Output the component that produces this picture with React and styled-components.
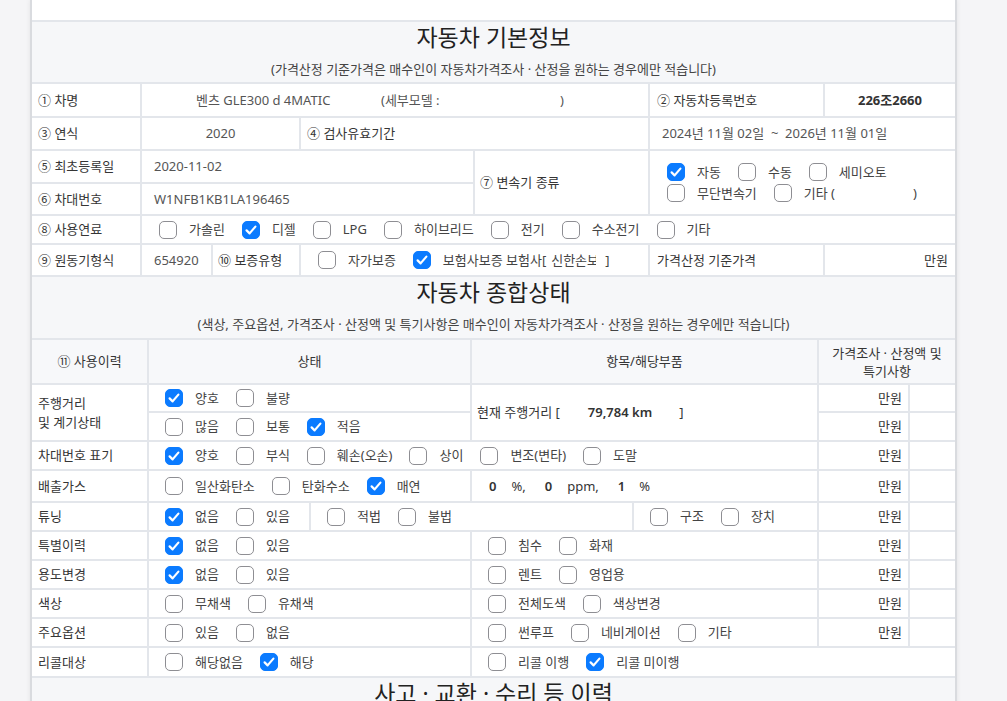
import React from 'react';
import styled, { createGlobalStyle } from 'styled-components';

const LINE = '#e3e6eb';

const Global = createGlobalStyle`
  html, body {
    margin: 0;
    background: #f5f5f7;
    font-family: "Noto Sans", "Noto Sans CJK KR", sans-serif;
    color: #333;
  }
`;

const Page = styled.div`
  height: 701px;
  overflow: hidden;
  padding-left: 30px;
`;

const Sheet = styled.div`
  width: 923px;
  background: ${LINE};
  border-left: 2px solid #d9dbdf;
  border-right: 2px solid #d9dbdf;
  box-shadow: 0 0 5px rgba(0, 0, 0, 0.08);
  display: flex;
  flex-direction: column;
  gap: 2px;
`;

const TopGap = styled.div`
  height: 20px;
  background: #fff;
`;

const SectionHead = styled.div`
  height: ${(p) => p.$h || 60}px;
  background: #f6f7f9;
  display: flex;
  flex-direction: column;
  align-items: center;
`;

const Title = styled.div`
  font-size: 23px;
  line-height: 30px;
  color: #222;
`;

const Note = styled.div`
  margin-top: 7px;
  font-size: 13px;
  line-height: 20px;
  color: #444;
`;

const Grid = styled.div`
  display: grid;
  gap: 2px;
  grid-template-columns: ${(p) => p.$cols};
  grid-template-rows: ${(p) => p.$rows};
`;

const Cell = styled.div`
  grid-column: span ${(p) => p.$span || 1};
  grid-row: span ${(p) => p.$rows || 1};
  background: ${(p) => (p.$head ? '#f7f8fa' : '#fff')};
  display: flex;
  align-items: center;
  justify-content: ${(p) =>
    p.$align === 'center' ? 'center' : p.$align === 'right' ? 'flex-end' : 'flex-start'};
  text-align: ${(p) => p.$align || 'left'};
  padding: 0 ${(p) => (p.$pad === undefined ? 6 : p.$pad)}px;
  font-size: 13px;
  line-height: ${(p) => p.$lh || 19}px;
  color: ${(p) => (p.$soft ? '#555' : '#353535')};
  white-space: pre;
  overflow: hidden;
`;

const Stack = styled.div`
  display: flex;
  flex-direction: column;
  gap: 2px;
`;

const Row = styled.div`
  display: flex;
  align-items: center;
`;

const Item = styled.span`
  display: inline-flex;
  align-items: center;
  margin-right: 17px;
  color: #444;
`;

const Box = styled.span`
  width: 18px;
  height: 18px;
  box-sizing: border-box;
  border-radius: 5px;
  border: 1.5px solid ${(p) => (p.$on ? '#0b7bff' : '#8e8e93')};
  background: ${(p) => (p.$on ? '#0b7bff' : '#fff')};
  margin-right: 12px;
  display: flex;
  align-items: center;
  justify-content: center;
  flex-shrink: 0;
`;

const Fixed = styled.span`
  display: inline-block;
  width: ${(p) => p.$w}px;
`;

const Strong = styled.span`
  font-weight: ${(p) => p.$weight || 600};
  color: #333;
  margin-left: ${(p) => p.$ml || 0}px;
`;

const Unit = styled.span`
  margin-left: ${(p) => p.$ml || 0}px;
`;

// narrow input box in the reference: the insurer name is cut off
const Clip = styled.span`
  display: inline-block;
  width: 45px;
  overflow: hidden;
  margin: 0 9px 0 5px;
  vertical-align: bottom;
`;

const Check = ({ on, children }) => (
  <Item>
    <Box $on={on}>
      {on && (
        <svg width="14" height="14" viewBox="0 0 14 14">
          <path d="M2.6 7.4 L5.6 10.4 L11.4 3.6" fill="none" stroke="#fff" strokeWidth="2.2" strokeLinecap="round" strokeLinejoin="round" />
        </svg>
      )}
    </Box>
    <span>{children}</span>
  </Item>
);

const Checks = ({ list }) => (
  <Row>
    {list.map(([text, on]) => (
      <Check key={text} on={on}>{text}</Check>
    ))}
  </Row>
);

const fuels = [['가솔린'], ['디젤', 1], ['LPG'], ['하이브리드'], ['전기'], ['수소전기'], ['기타']];

const simpleRows = [
  ['특별이력', [['없음', 1], ['있음']], [['침수'], ['화재']]],
  ['용도변경', [['없음', 1], ['있음']], [['렌트'], ['영업용']]],
  ['색상', [['무채색'], ['유채색']], [['전체도색'], ['색상변경']]],
  ['주요옵션', [['있음'], ['없음']], [['썬루프'], ['네비게이션'], ['기타']]],
];

const Price = () => (
  <>
    <Cell $align="right">만원</Cell>
    <Cell />
  </>
);

export default function App() {
  return (
    <Page>
      <Global />
      <Sheet>
        <TopGap />
        <SectionHead>
          <Title>자동차 기본정보</Title>
          <Note>(가격산정 기준가격은 매수인이 자동차가격조사 · 산정을 원하는 경우에만 적습니다)</Note>
        </SectionHead>

        <Grid $cols="108px 69px 86px 172px 173px 173px 130px" $rows="32px 31px 31px 30px 27px 30px">
          <Cell>① 차명</Cell>
          <Cell $span={4} $pad={54} $soft>
            <Fixed $w={185}>벤츠 GLE300 d 4MATIC</Fixed>
            <Fixed $w={179}>(세부모델 :</Fixed>)
          </Cell>
          <Cell $pad={7}>② 자동차등록번호</Cell>
          <Cell $align="center"><Strong $weight={700}>226조2660</Strong></Cell>

          <Cell>③ 연식</Cell>
          <Cell $span={2} $align="center" $soft>2020</Cell>
          <Cell $span={2}>④ 검사유효기간</Cell>
          <Cell $span={2} $pad={12} $soft>2024년 11월 02일  ~  2026년 11월 01일</Cell>

          <Cell>⑤ 최초등록일</Cell>
          <Cell $span={3} $pad={12} $soft>2020-11-02</Cell>
          <Cell $rows={2} $pad={5}>⑦ 변속기 종류</Cell>
          <Cell $rows={2} $span={2} $pad={17}>
            <Stack>
              <Checks list={[['자동', 1], ['수동'], ['세미오토']]} />
              <Row>
                <Check>무단변속기</Check>
                <Check>기타 (<Unit $ml={78}>)</Unit></Check>
              </Row>
            </Stack>
          </Cell>

          <Cell>⑥ 차대번호</Cell>
          <Cell $span={3} $pad={12} $soft>W1NFB1KB1LA196465</Cell>

          <Cell>⑧ 사용연료</Cell>
          <Cell $span={6} $pad={17}>
            <Checks list={fuels} />
          </Cell>

          <Cell>⑨ 원동기형식</Cell>
          <Cell $pad={12} $soft>654920</Cell>
          <Cell $pad={5}>⑩ 보증유형</Cell>
          <Cell $span={2} $pad={17}>
            <Check>자가보증</Check>
            <Check on>보험사보증 보험사[<Clip>신한손보험</Clip>]</Check>
          </Cell>
          <Cell $pad={7}>가격산정 기준가격</Cell>
          <Cell $align="right" $pad={7}>만원</Cell>
        </Grid>

        <SectionHead $h={61}>
          <Title>자동차 종합상태</Title>
          <Note>(색상, 주요옵션, 가격조사 · 산정액 및 특기사항은 매수인이 자동차가격조사 · 산정을 원하는 경우에만 적습니다)</Note>
        </SectionHead>

        <Grid
          $cols="115px 160px 159px 160px 183px 89px 45px"
          $rows="43px 26px 27px 27px 30px 27px 27px 27px 27px 27px 28px"
        >
          <Cell $head $align="center">⑪ 사용이력</Cell>
          <Cell $head $span={2} $align="center">상태</Cell>
          <Cell $head $span={2} $align="center">항목/해당부품</Cell>
          <Cell $head $span={2} $align="center" $lh={18}>{'가격조사 · 산정액 및\n특기사항'}</Cell>

          <Cell $rows={2}>{'주행거리\n및 계기상태'}</Cell>
          <Cell $span={2} $pad={16}><Checks list={[['양호', 1], ['불량']]} /></Cell>
          <Cell $span={2} $rows={2} $pad={5}>
            현재 주행거리 [<Strong $ml={28}>79,784 km</Strong><Unit $ml={27}>]</Unit>
          </Cell>
          <Price />
          <Cell $span={2} $pad={16}><Checks list={[['많음'], ['보통'], ['적음', 1]]} /></Cell>
          <Price />

          <Cell>차대번호 표기</Cell>
          <Cell $span={4} $pad={16}>
            <Checks list={[['양호', 1], ['부식'], ['훼손(오손)'], ['상이'], ['변조(변타)'], ['도말']]} />
          </Cell>
          <Price />

          <Cell>배출가스</Cell>
          <Cell $span={2} $pad={16}><Checks list={[['일산화탄소'], ['탄화수소'], ['매연', 1]]} /></Cell>
          <Cell $span={2} $pad={17}>
            <Strong>0</Strong><Unit $ml={15}>%,</Unit>
            <Strong $ml={19}>0</Strong><Unit $ml={15}>ppm,</Unit>
            <Strong $ml={19}>1</Strong><Unit $ml={14}>%</Unit>
          </Cell>
          <Price />

          <Cell>튜닝</Cell>
          <Cell $pad={16}><Checks list={[['없음', 1], ['있음']]} /></Cell>
          <Cell $span={2} $pad={16}><Checks list={[['적법'], ['불법']]} /></Cell>
          <Cell $pad={16}><Checks list={[['구조'], ['장치']]} /></Cell>
          <Price />

          {simpleRows.map(([label, state, parts]) => (
            <React.Fragment key={label}>
              <Cell>{label}</Cell>
              <Cell $span={2} $pad={16}><Checks list={state} /></Cell>
              <Cell $span={2} $pad={16}><Checks list={parts} /></Cell>
              <Price />
            </React.Fragment>
          ))}

          <Cell>리콜대상</Cell>
          <Cell $span={2} $pad={16}><Checks list={[['해당없음'], ['해당', 1]]} /></Cell>
          <Cell $span={4} $pad={16}><Checks list={[['리콜 이행'], ['리콜 미이행', 1]]} /></Cell>
        </Grid>

        <SectionHead $h={80}>
          <Title>사고 · 교환 · 수리 등 이력</Title>
        </SectionHead>
      </Sheet>
    </Page>
  );
}
